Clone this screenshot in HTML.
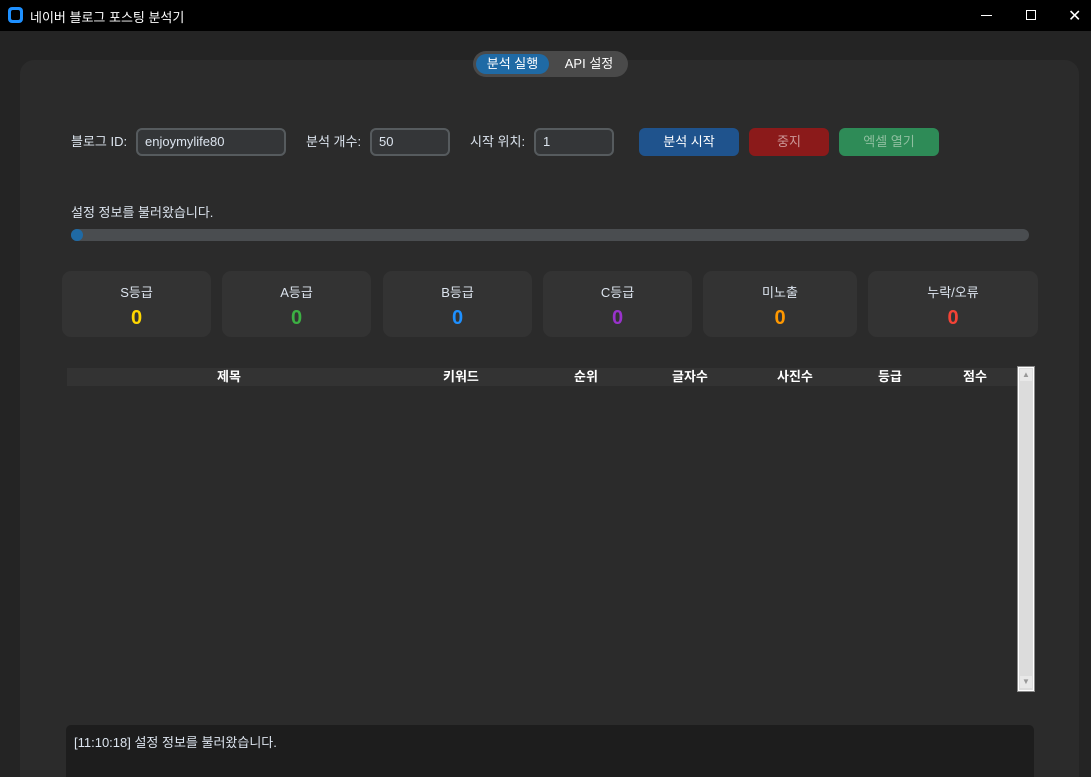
<!DOCTYPE html>
<html><head><meta charset="utf-8"><style>
*{box-sizing:border-box;margin:0;padding:0}
html,body{width:1091px;height:777px;overflow:hidden}
body{background:#242424;position:relative;font-family:"Liberation Sans","Noto Sans CJK KR",sans-serif;color:#dce4ee;font-size:13px}
.abs{position:absolute}
.title{left:0;top:0;width:1091px;height:31px;background:#000}
.panel{left:20px;top:60px;width:1059px;height:730px;background:#2b2b2b;border-radius:14px}
.inp{background:#343638;border:2px solid #565b5e;border-radius:6px;height:28px;padding:4px 7px;font-size:13px;color:#dce4ee}
.btn{height:28px;border-radius:6px;text-align:center;line-height:28px;font-size:13px}
.card{background:#333333;border-radius:9px;top:271px;height:66px;text-align:center}
.card .l{margin-top:11px;font-size:13px;color:#dce4ee}
.card .v{font-size:20px;font-weight:bold;margin-top:6px}
.th{top:368px;height:18px;font-weight:bold;font-size:13px;color:#fff;line-height:18px}
</style></head><body>
<div class="abs title"></div>
<div class="abs" style="left:8px;top:7px;width:15px;height:16px;background:#1e90ff;border-radius:4px"></div>
<div class="abs" style="left:11px;top:10px;width:9px;height:10px;background:#000;border-radius:2px"></div>
<div class="abs" style="left:30px;top:7px;font-size:13px;color:#fff">네이버 블로그 포스팅 분석기</div>
<div class="abs" style="left:981px;top:15px;width:11px;height:1px;background:#fff"></div>
<div class="abs" style="left:1026px;top:10px;width:10px;height:10px;border:1px solid #fff"></div>
<div class="abs" style="left:1068px;top:6px;font-size:16px;color:#fff">✕</div>
<div class="abs panel"></div>
<div class="abs" style="left:473px;top:51px;width:155px;height:26px;background:#4a4a4a;border-radius:13px"></div>
<div class="abs" style="left:476px;top:54px;width:73px;height:20px;background:#1f6aa5;border-radius:10px;text-align:center;line-height:20px;color:#fff">분석 실행</div>
<div class="abs" style="left:555px;top:54px;width:68px;height:20px;text-align:center;line-height:20px;color:#fff">API 설정</div>

<div class="abs" style="left:71px;top:131px">블로그 ID:</div>
<div class="abs inp" style="left:136px;top:128px;width:150px">enjoymylife80</div>
<div class="abs" style="left:306px;top:131px">분석 개수:</div>
<div class="abs inp" style="left:370px;top:128px;width:80px">50</div>
<div class="abs" style="left:470px;top:131px">시작 위치:</div>
<div class="abs inp" style="left:534px;top:128px;width:80px">1</div>
<div class="abs btn" style="left:639px;top:128px;width:100px;background:#1f538d;color:#fff">분석 시작</div>
<div class="abs btn" style="left:749px;top:128px;width:80px;background:#8b1a1a;color:#c99">중지</div>
<div class="abs btn" style="left:839px;top:128px;width:100px;background:#2e8b57;color:#8fbfa0">엑셀 열기</div>

<div class="abs" style="left:71px;top:202px">설정 정보를 불러왔습니다.</div>
<div class="abs" style="left:71px;top:229px;width:958px;height:12px;background:#4a4d50;border-radius:6px"></div>
<div class="abs" style="left:71px;top:229px;width:12px;height:12px;background:#1f6aa5;border-radius:6px"></div>

<div class="abs card" style="left:62px;width:149px"><div class="l">S등급</div><div class="v" style="color:#ffd700">0</div></div>
<div class="abs card" style="left:222px;width:149px"><div class="l">A등급</div><div class="v" style="color:#3cb043">0</div></div>
<div class="abs card" style="left:383px;width:149px"><div class="l">B등급</div><div class="v" style="color:#1e90ff">0</div></div>
<div class="abs card" style="left:543px;width:149px"><div class="l">C등급</div><div class="v" style="color:#9932cc">0</div></div>
<div class="abs card" style="left:703px;width:154px"><div class="l">미노출</div><div class="v" style="color:#ff9800">0</div></div>
<div class="abs card" style="left:868px;width:170px"><div class="l">누락/오류</div><div class="v" style="color:#f44336">0</div></div>

<div class="abs" style="left:67px;top:368px;width:951px;height:18px;background:#333"></div>
<div class="abs th" style="left:217px">제목</div>
<div class="abs th" style="left:443px">키워드</div>
<div class="abs th" style="left:574px">순위</div>
<div class="abs th" style="left:672px">글자수</div>
<div class="abs th" style="left:777px">사진수</div>
<div class="abs th" style="left:878px">등급</div>
<div class="abs th" style="left:963px">점수</div>
<div class="abs" style="left:1018px;top:367px;width:16px;height:324px;background:#dcdcdc;border:1px solid #fff;outline:1px solid #888"></div>
<div class="abs" style="left:1020px;top:369px;width:12px;height:12px;background:#e8e8e8;color:#999;font-size:8px;text-align:center;line-height:12px">▲</div>
<div class="abs" style="left:1020px;top:676px;width:12px;height:12px;background:#e8e8e8;color:#999;font-size:8px;text-align:center;line-height:12px">▼</div>

<div class="abs" style="left:66px;top:725px;width:968px;height:60px;background:#1d1d1d;border-radius:5px"></div>
<div class="abs" style="left:74px;top:732px">[11:10:18] 설정 정보를 불러왔습니다.</div>
</body></html>
